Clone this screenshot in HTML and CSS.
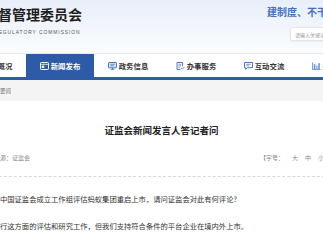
FILE: index.html
```html
<!DOCTYPE html>
<html lang="zh-CN">
<head>
  <meta charset="UTF-8">
  <meta name="viewport" content="width=device-width, initial-scale=1.0">
  <title>证监会新闻发言人答记者问</title>
  <link rel="stylesheet" href="styles.css">
</head>
<body>
  <header class="top">
    <div class="top-inner">
      <div class="logo">
        <div class="logo-cn">中国证券监督管理委员会</div>
        <div class="logo-en">China Securities Regulatory Commission</div>
      </div>
      <div class="top-right">
        <div class="slogan">建制度、不干预、零容忍</div>
        <div class="search"><input type="text" placeholder="请输入关键词"></div>
      </div>
    </div>
  </header>

  <nav class="nav">
    <a class="nav-item">
      <svg class="ico" viewBox="0 0 9 8"><path d="M1 1h7v6H1z" fill="none" stroke="#4a78c2"/></svg>
      <span>机构概况</span>
    </a>
    <a class="nav-item active">
      <svg class="ico" viewBox="0 0 9 8"><rect x="0.5" y="0.5" width="8" height="7" rx="0.8" fill="none" stroke="#fff"/><path d="M0.5 2.3h8" stroke="#fff" stroke-width="0.8"/><rect x="1.8" y="3.6" width="2.4" height="2.4" fill="#fff"/></svg>
      <span>新闻发布</span>
    </a>
    <a class="nav-item">
      <svg class="ico" viewBox="0 0 9 8"><rect x="0.5" y="0.5" width="8" height="5.3" rx="0.6" fill="#cfdcf2" stroke="#4a78c2"/><path d="M2.5 2.4h4M2.5 3.8h3" stroke="#4a78c2" stroke-width="0.7"/><path d="M4.5 5.8v1.4M2.6 7.4h3.8" stroke="#4a78c2" stroke-width="0.9"/></svg>
      <span>政务信息</span>
    </a>
    <a class="nav-item">
      <svg class="ico" viewBox="0 0 9 8"><path d="M6.5 4.2V0.5H1v7h3.4" fill="none" stroke="#4a78c2"/><path d="M2.4 2.3h2.8M2.4 3.8h2.8M2.4 5.3h1.6" stroke="#4a78c2" stroke-width="0.7"/><path d="M5.2 6.2l1 1 2.1-2.2" fill="none" stroke="#4a78c2" stroke-width="0.9"/></svg>
      <span>办事服务</span>
    </a>
    <a class="nav-item">
      <svg class="ico" viewBox="0 0 9 8"><path d="M0.5 0.5h8v5.2H3.6L1.6 7.4V5.7H0.5z" fill="none" stroke="#4a78c2" stroke-linejoin="round"/><path d="M2.2 2.3h4.6M2.2 3.8h3" stroke="#4a78c2" stroke-width="0.7"/></svg>
      <span>互动交流</span>
    </a>
    <a class="nav-item">
      <svg class="ico" viewBox="0 0 9 8"><path d="M0.6 0.5v7h8" fill="none" stroke="#4a78c2" stroke-width="0.8"/><rect x="1.8" y="2.2" width="1.6" height="5" fill="#6f95d4"/><rect x="4" y="3.6" width="1.6" height="3.6" fill="#9bb6e3"/><rect x="6.2" y="1.2" width="1.6" height="6" fill="#6f95d4"/></svg>
      <span>统计信息</span>
    </a>
  </nav>

  <div class="crumb-bar">
    <div class="crumb"><span>当前位置：首页 &gt; 新闻发布 &gt; 要闻</span></div>
  </div>

  <main class="article">
    <h1 class="article-title">证监会新闻发言人答记者问</h1>
    <div class="meta">
      <span class="source">来源：证监会</span>
      <span class="fontsize">【字号：<a>大</a><a>中</a><a>小</a>】</span>
    </div>
    <div class="content">
      <p>问：近日有媒体报道称中国证监会成立工作组评估蚂蚁集团重启上市，请问证监会对此有何评论?</p>
      <p>答：目前，我们没有进行这方面的评估和研究工作，但我们支持符合条件的平台企业在境内外上市。</p>
    </div>
  </main>
</body>
</html>
```

FILE: styles.css
```css
:root {
  --azul: #2d5ba8;
  --azul-claro: #4a78c2;
  --texto: #333333;
  --cinza: #f4f4f4;
}
* {
  margin: 0;
  padding: 0;
  box-sizing: border-box;
}
body {
  font-family: "Noto Sans CJK SC", "Noto Sans", sans-serif;
  background: #ffffff;
  color: var(--texto);
  overflow: hidden;
}
a {
  color: inherit;
  text-decoration: none;
}

/* topo */
.top {
  height: 54px;
  border-bottom: 1px solid #e4e9f0;
  background: linear-gradient(to bottom, #e9eff9, #fafcfe);
}
.top-inner {
  display: flex;
  padding-top: 6px;
  margin-left: -72px;
  white-space: nowrap;
}
.logo {
  flex: none;
  width: 154px;
}
.logo-cn {
  font-size: 14px;
  line-height: 16px;
  font-weight: 700;
  color: #1e1e1e;
}
.logo-en {
  margin-top: 8px;
  padding-left: 3px;
  font-family: "Liberation Sans", sans-serif;
  font-size: 4.9px;
  line-height: 6px;
  letter-spacing: 0.95px;
  text-transform: uppercase;
  color: #555;
}
.top-right {
  flex: none;
  margin-left: 185px;
}
.slogan {
  font-size: 10px;
  line-height: 12px;
  font-weight: 700;
  color: #4571b8;
}
.search {
  margin-top: 9px;
  margin-left: 23px;
}
.search input {
  display: block;
  width: 90px;
  height: 14px;
  border: 1px solid #e2e6ec;
  border-radius: 2px;
  background: #fff;
  padding-left: 4px;
  font-family: inherit;
  font-size: 5px;
  box-shadow: 0 1px 2px rgba(0,0,0,0.05);
}
.search input::placeholder {
  color: #999;
}

/* menu */
.nav {
  display: flex;
  height: 26px;
  margin-left: -42px;
  background: #fff;
  border-bottom: 3px solid var(--azul);
}
.nav-item {
  flex: 0 0 68px;
  display: flex;
  align-items: center;
  justify-content: center;
  gap: 2px;
  font-size: 7.4px;
  font-weight: 700;
  color: #333;
  white-space: nowrap;
}
.nav-item.active {
  background: var(--azul);
  color: #fff;
}
.ico {
  width: 9px;
  height: 8px;
  flex: none;
}

/* breadcrumb */
.crumb-bar {
  height: 21px;
  background: var(--cinza);
  display: flex;
  align-items: center;
}
.crumb {
  width: 11px;
  display: flex;
  justify-content: flex-end;
  white-space: nowrap;
  font-size: 5.5px;
  color: #777;
}

/* artigo */
.article {
  padding-top: 23px;
}
.article-title {
  font-size: 9.5px;
  line-height: 12px;
  font-weight: 700;
  text-align: center;
  color: #222;
}
.meta {
  display: flex;
  width: 336px;
  margin-left: -6px;
  margin-top: 18px;
  padding-bottom: 14px;
  border-bottom: 1px dashed #d8d8d8;
  font-size: 6px;
  line-height: 8px;
  color: #888;
  white-space: nowrap;
}
.fontsize {
  margin-left: auto;
}
.fontsize a {
  margin-left: 7px;
}
.fontsize a:first-child {
  margin-left: 8px;
}
.content {
  width: 460px;
  margin-left: -73px;
  padding-top: 15px;
}
.content p {
  font-size: 7.3px;
  line-height: 14px;
  margin-bottom: 13px;
  white-space: nowrap;
  color: var(--texto);
}
```
